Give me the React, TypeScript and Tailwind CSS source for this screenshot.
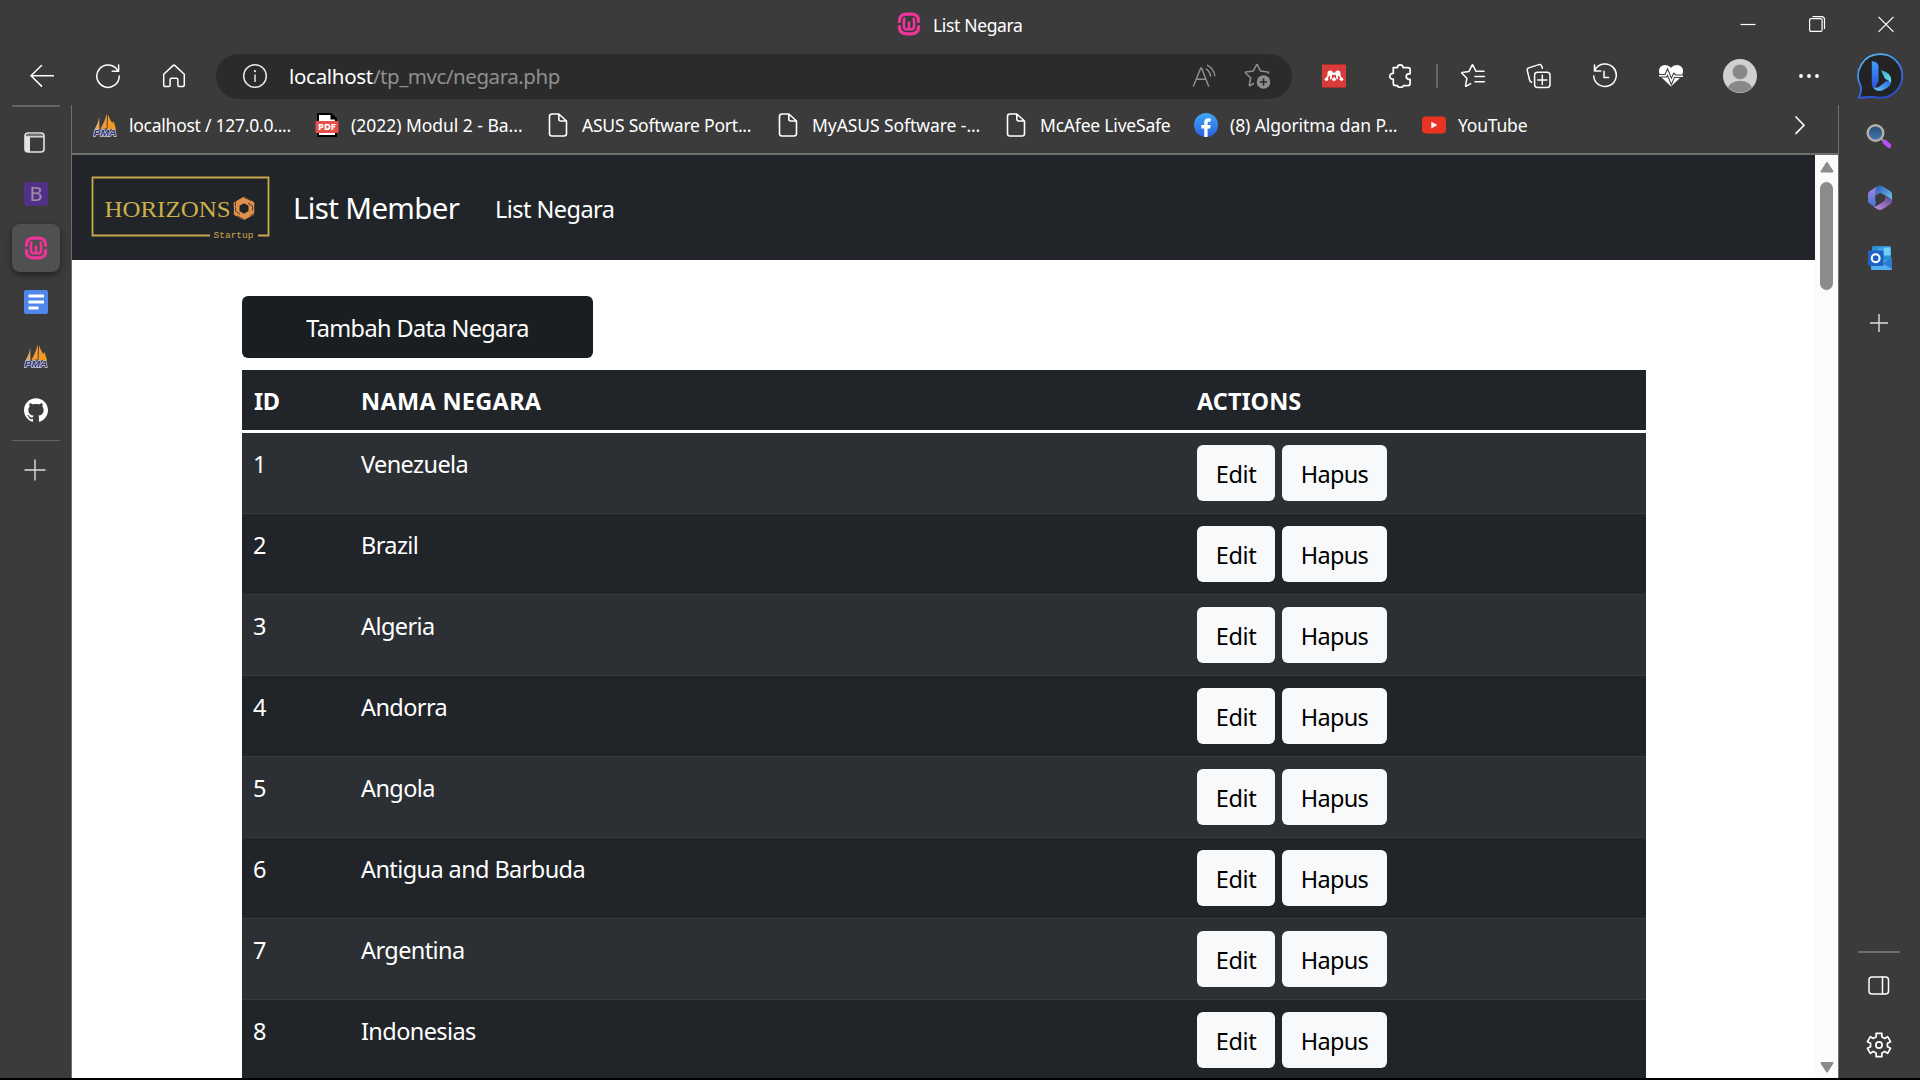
import type { ReactNode } from "react";
import { SiGithub } from "react-icons/si";

type Bookmark = { label: string; icon: ReactNode; cell: string; text: string };

const line = { fill: "none", stroke: "currentColor", strokeWidth: 1.5, strokeLinecap: "round", strokeLinejoin: "round" } as const;

function Icon({ children, size = 24, className = "" }: { children: ReactNode; size?: number; className?: string }) {
  return (
    <svg width={size} height={size} viewBox={`0 0 ${size} ${size}`} className={`shrink-0 ${className}`}>
      {children}
    </svg>
  );
}

const BackIcon = () => (
  <Icon><path {...line} d="M23.5 11.8H1M11.5 1.5 1 11.8l10.5 10.3" /></Icon>
);

const ReloadIcon = () => (
  <Icon size={26}><path {...line} d="M22.5 7.2A11.2 11.2 0 1 0 24.2 13M23.6 2v6.2h-6.4" /></Icon>
);

const HomeIcon = () => (
  <Icon>
    <path {...line} d="M1.7 10.3 11 1.6q1-.9 2 0l9.3 8.7v10.4q0 1.8-1.8 1.8h-3.4q-1.2 0-1.2-1.2v-5.6q0-1.5-1.5-1.5h-4.8q-1.5 0-1.5 1.5v5.6q0 1.2-1.2 1.2H3.5q-1.8 0-1.8-1.8z" />
  </Icon>
);

const InfoIcon = () => (
  <Icon size={26} className="text-[#e6e6e6]">
    <circle {...line} cx="13" cy="13" r="11.3" />
    <path {...line} strokeLinecap="butt" d="M13 11.5v7.5" />
    <circle cx="13" cy="8.2" r="1.1" fill="currentColor" />
  </Icon>
);

const ReadAloudIcon = () => (
  <Icon size={26} className="text-[#8f8f8f]">
    <path {...line} d="M2.5 23 9.8 5h.8L17.5 23M5.2 16.3h9.8M15.3 6.2q3.7 2.3 4.2 7M16.5 2.3q6.4 3.5 7.3 10.3" />
  </Icon>
);

const AddFavoriteIcon = () => (
  <Icon size={28} className="text-[#8f8f8f]">
    <path {...line} d="M9.5 20.5 6 22.7q-.7.3-.7-.5l1.4-7.2L1.5 10q-.5-.7.4-.9l7.3-1L12.4 2q.5-.8 1 0l3.2 6.1 7.3 1q.9.2.4 1" />
    <circle cx="19.5" cy="19" r="6.8" fill="#8f8f8f" />
    <path d="M19.5 15.3v7.4M15.8 19h7.4" stroke="#2b2b2b" strokeWidth="1.6" />
  </Icon>
);

const MendeleyIcon = () => (
  <Icon>
    <rect width="24" height="24" fill="#d93a3a" />
    <path d="M0 .5h24M0 23.5h24" stroke="#a12f2f" />
    <g fill="#fff">
      <circle cx="8.2" cy="9.2" r="2.7" /><circle cx="15.8" cy="9.2" r="2.7" /><circle cx="12" cy="9.8" r="1.4" />
      <circle cx="4.5" cy="15.2" r="1.8" /><circle cx="19.5" cy="15.2" r="1.8" /><circle cx="12" cy="15.2" r="1.9" />
    </g>
    <path d="M7 9.5 4.8 15M17 9.5l2.2 5.5M9.2 10l-.4 4.5M14.8 10l.4 4.500" stroke="#fff" strokeWidth="1.8" strokeLinecap="round" />
  </Icon>
);

const PuzzleIcon = () => (
  <Icon>
    <path {...line} strokeWidth={1.7} d="M5.3 3.6h4.1c.3-3.6 5.4-3.6 5.7 0h5q2 0 2 2v4.2h-1.4c-3.3.4-3.3 5.2 0 5.6h1.4v4.2q0 2-2 2h-4.7c-.6 2.4-5.4 2.4-6 0H7.3q-2 0-2-2v-4.4c-4.7.1-4.7-6 0-5.9z" />
  </Icon>
);

const FavoritesIcon = () => (
  <Icon size={26}>
    <path {...line} d="M16 8.3 13 2.3q-.5-.9-1 0L9 8.4l-6.8 1q-.9.2-.3.9l5 4.9-1.3 7.5q-.1.9.7.5l4.4-2.6M16 8.3h8M15 13.4h9.3M15 18.8h9.3" />
  </Icon>
);

const CollectionsIcon = () => (
  <Icon size={26}>
    <path {...line} d="M5.6 19.2Q4 18.8 3.6 17L1.3 7.6q-.4-2 1.4-2.7L12.9 1.6q2-.4 2.8 1.4l.7 2.2" />
    <rect {...line} x="8.6" y="9.2" width="15.4" height="15.4" rx="3" />
    <path {...line} d="M16.3 12.3v9.2M11.7 16.9h9.2" />
  </Icon>
);

const HistoryIcon = () => (
  <Icon size={26}>
    <path {...line} d="M2.8 7.3A11.3 11.3 0 1 1 1.7 13M2.5 2v6h6.2M12 8.2v6.2h4.6" />
  </Icon>
);

const HeartPulseIcon = () => (
  <Icon size={26}>
    <path fill="#fff" d="M13 23.5 3 14Q1 11.500 1 8.500 1 2 7.300 2 10.800 2 13 4.800 15.200 2 18.700 2 25 2 25 8.500q0 3-2 5.500z" />
    <path d="M0 12.800h7.800l1.700-3.700 3.900 9.300 2.700-6.200 1.100 1H26" fill="none" stroke="#3b3b3b" strokeWidth="3.600" />
    <path d="M1 12.800h6.800l1.700-3.700 3.900 9.300 2.700-6.200 1.100 1H25" fill="none" stroke="#fff" strokeWidth="1.500" />
  </Icon>
);

const AvatarIcon = () => (
  <Icon size={34}>
    <defs><clipPath id="avatar"><circle cx="17" cy="17" r="16.5" /></clipPath></defs>
    <circle cx="17" cy="17" r="17" fill="#d2d0ce" />
    <circle cx="17" cy="12.8" r="7.4" fill="#8a8886" />
    <ellipse cx="17" cy="31.5" rx="12.5" ry="9.8" fill="#8a8886" clipPath="url(#avatar)" />
  </Icon>
);

const DotsIcon = () => (
  <Icon><circle cx="4" cy="12" r="1.9" fill="#fff" /><circle cx="12" cy="12" r="1.9" fill="#fff" /><circle cx="20" cy="12" r="1.9" fill="#fff" /></Icon>
);

const BingIcon = () => (
  <Icon size={46}>
    <defs>
      <linearGradient id="bubble" x1="0" y1="0" x2=".4" y2="1"><stop offset="0" stopColor="#55c0f5" /><stop offset=".5" stopColor="#3f86ee" /><stop offset="1" stopColor="#2a50d8" /></linearGradient>
      <linearGradient id="stem" x1="0" y1="0" x2="0" y2="1"><stop offset="0" stopColor="#3fa0f5" /><stop offset="1" stopColor="#2a50e0" /></linearGradient>
      <linearGradient id="foot" x1="0" y1="1" x2="1" y2="0"><stop offset="0" stopColor="#62c8f8" /><stop offset="1" stopColor="#2b62e4" /></linearGradient>
      <linearGradient id="leaf" x1="0" y1="0" x2="1" y2="1"><stop offset="0" stopColor="#3fa6e8" /><stop offset="1" stopColor="#6be3d8" /></linearGradient>
    </defs>
    <path d="M23 1.2a21.7 21.7 0 1 1-3 43.1q-5-.8-18.2.5 3-5.5 2-11.5A21.7 21.7 0 0 1 23 1.2z" fill="#232323" stroke="url(#bubble)" strokeWidth="1.8" strokeLinejoin="round" />
    <path d="M14.8 8q5.5 1 6.700 4.400v15.500l-3.200 7.200q-3.500-.9-3.500-5.200z" fill="url(#stem)" />
    <path d="M15.4 33q1.800 3 6.300 1.100l8-6.300h4.400q.2 4.700-3.600 6.700l-5.300 3q-3.500 1.200-7-.8-2.100-1.400-2.800-3.700z" fill="url(#foot)" />
    <path d="M24 17.200q10 2.300 10.200 9.800.1 1.600-.6 2.800-1.200-2.400-5.700-4z" fill="url(#leaf)" />
  </Icon>
);

const WampIcon = () => (
  <Icon>
    <g fill="none" stroke="#ee3399">
      <path strokeWidth="3.2" d="M2.4 10.8V9.2Q2.4 2.2 9.4 2.2h5.2Q21.6 2.2 21.600 9.200v1.6M2.4 13.200v1.6q0 7 7 7h5.2q7 0 7-7v-1.6" />
      <path strokeWidth="2.6" d="M8.2 5.8Q6.9 6.6 6.9 9v4.5q0 4 3 4 2.1 0 2.1-2.4v-5.5M12 15.1q0 2.4 2.1 2.4 3 0 3-4V9q0-2.4-1.3-3.2" />
    </g>
  </Icon>
);

const PmaIcon = () => (
  <Icon>
    <defs><linearGradient id="sail" x1="0" y1="0" x2="1" y2="0"><stop offset="0" stopColor="#dcae7a" /><stop offset=".5" stopColor="#f39a2c" /><stop offset="1" stopColor="#f7981d" /></linearGradient></defs>
    <path d="M6.2 4 6.5 16 1.5 16.5Q5.5 10 6.2 4zM14 .2 13.7 15.5 7.5 16Q12 8 14 .2zM15 1.5Q18 9 19.5 10l1-2 2 6.5.5 2-8.5-.5z" fill="url(#sail)" />
    <text x="0.5" y="23.4" fontFamily="Liberation Sans" fontWeight="700" fontStyle="italic" fontSize="9.5" textLength="23" lengthAdjust="spacingAndGlyphs" fill="#30356f" stroke="#cfd0e4" strokeWidth="1.3" paintOrder="stroke">PMA</text>
  </Icon>
);

const PdfIcon = () => (
  <Icon>
    <path d="M3 1h13l5 5v17H3z" fill="#fff" stroke="#000" strokeWidth="2" />
    <path d="M15.500 0 22 6.5h-6.5z" fill="#000" />
    <rect x=".5" y="8" width="23" height="12" rx="1" fill="#e8504c" />
    <text x="3" y="17" fontFamily="Noto Sans" fontWeight="800" fontSize="8.5" textLength="18" lengthAdjust="spacingAndGlyphs" fill="#fff">PDF</text>
  </Icon>
);

const FileIcon = () => (
  <Icon>
    <path {...line} strokeWidth={1.6} d="M6 1h6.8L20.5 8v12.5q0 2.5-2.5 2.5H6q-2.500 0-2.500-2.500v-17Q3.500 1 6 1zM12.8 1v5q0 2 2 2h5.7" />
  </Icon>
);

const FacebookIcon = () => (
  <Icon>
    <defs>
      <linearGradient id="fb" x1="0" y1="0" x2="0" y2="1"><stop offset="0" stopColor="#3fa9f5" /><stop offset="1" stopColor="#2a5fe0" /></linearGradient>
      <clipPath id="fbc"><circle cx="12" cy="12" r="12" /></clipPath>
    </defs>
    <circle cx="12" cy="12" r="12" fill="url(#fb)" />
    <path clipPath="url(#fbc)" d="M10.2 24v-8.5H7.3V12h2.9V9.7q0-4.4 4.2-4.4 1.2 0 2.3.3v3h-1.4q-1.7 0-1.7 1.7V12h3.1l-.5 3.5h-2.6V24z" fill="#fff" />
  </Icon>
);

const YoutubeIcon = () => (
  <Icon><rect y="3.5" width="24" height="17" rx="4" fill="#ea3323" /><path d="M9.3 8.800v6.6l6-3.3z" fill="#fff" /></Icon>
);

const TabsIcon = () => (
  <Icon>
    <rect x="1" y="2" width="19" height="19" rx="3" fill="none" stroke="#e4e4e4" strokeWidth="1.6" />
    <path d="M1.800 5q0-2.200 2.200-2.200h13q2.200 0 2.200 2.200z" fill="#777" />
    <path d="M1 6h5v15H4q-3 0-3-3z" fill="#e4e4e4" />
    <path d="M1 5.800h19" stroke="#e4e4e4" strokeWidth="1.4" />
  </Icon>
);

const DocsIcon = () => (
  <Icon>
    <rect width="24" height="24" rx="2" fill="#4f86ec" />
    <path d="M4.500 6H20M4.500 12H20M4.500 18h10" stroke="#fff" strokeWidth="2.8" />
  </Icon>
);

const PlusIcon = ({ reach }: { reach: "wide" | "narrow" }) => (
  <Icon><path d={reach === "wide" ? "M12 1.500v21M1.500 12h21" : "M12 3v18M3 12h18"} stroke="#dedede" strokeWidth="1.4" /></Icon>
);

const SearchIcon = () => (
  <Icon size={28}>
    <defs>
      <linearGradient id="glass" x1="0" y1="0" x2="0" y2="1"><stop offset="0" stopColor="#2b4a68" /><stop offset="1" stopColor="#447ab8" /></linearGradient>
    </defs>
    <path d="m16.5 17 3 3" stroke="#999" strokeWidth="2" />
    <path d="m19.8 20 4.200 3.800" stroke="#b94df2" strokeWidth="4.600" strokeLinecap="round" />
    <circle cx="10.500" cy="11" r="7.800" fill="url(#glass)" stroke="#b4b0ac" strokeWidth="2.400" />
  </Icon>
);

const M365Icon = () => (
  <Icon size={26}>
    <defs>
      <linearGradient id="ma" x1="0" y1="0" x2="0" y2="1"><stop offset="0" stopColor="#a98add" /><stop offset="1" stopColor="#4472d8" /></linearGradient>
      <linearGradient id="mb" x1="0" y1="0" x2="1" y2="1"><stop offset="0" stopColor="#3058b8" /><stop offset="1" stopColor="#6cc6f4" /></linearGradient>
      <linearGradient id="mc" x1="0" y1="1" x2="1" y2="0"><stop offset="0" stopColor="#c391ea" /><stop offset="1" stopColor="#5f468f" /></linearGradient>
    </defs>
    <path d="M10.5 1.2Q8.700 3 8.700 6v11l-.5 4.500q-1 0-2-.6L2.500 18.600Q1 17.500 1 16V9q0-1.800 1.500-2.700z" fill="url(#ma)" />
    <path d="M10.5 1.2q2.500-1.300 5 0L23.500 6.200Q25 7.200 25 9v7q-.3-1.800-2-2.800L14.500 8.500Q11 8 9.500 12l-.8-2V5q.3-2.600 1.800-3.800z" fill="url(#mb)" />
    <path d="M25 15.500q.2 2.600-1.500 3.500l-8 5.200q-2.500 1.300-5 0L6 21.400q2.200.5 4-.7l6-4q2.400-1.600 1.600-5.300l5.400 2.200q1.600.7 2 1.900z" fill="url(#mc)" />
    <path d="m13 8.500 4.200 2.300v4.600L13 17.800l-4.200-2.400v-4.600z" fill="#3b3b3b" stroke="#3b3b3b" strokeLinejoin="round" />
  </Icon>
);

const OutlookIcon = () => (
  <Icon>
    <rect x="4" width="19" height="17" rx="1.5" fill="#2f8fd8" />
    <path d="M10 1.500h6v8h-6z" fill="#3ca4e4" /><path d="M16 1.500h6.500v8H16z" fill="#6fd0f8" />
    <path d="M3 14.500h21V24H4.500Q3 24 3 22.500z" fill="#53b2ee" /><path d="M24 11.500V23L14.500 17.500z" fill="#2c7bd0" />
    <rect y="4.500" width="15.500" height="15.500" rx="1.500" fill="#1f62c6" />
    <circle cx="7.700" cy="12.200" r="3.900" fill="none" stroke="#fff" strokeWidth="2.100" />
  </Icon>
);

const PanelIcon = () => (
  <Icon>
    <rect {...line} x="2" y="3" width="19.500" height="17" rx="3" /><path {...line} d="M15.500 3v17" />
  </Icon>
);

// Six-toothed outline of the settings gear, centred on (13, 13).
const gearPoints = Array.from({ length: 6 }, (_, k) =>
  [[-19, 8.6], [-14, 12], [14, 12], [19, 8.6]].map(([deg, r]) => {
    const a = ((k * 60 - 90 + deg) * Math.PI) / 180;
    return `${(13 + r * Math.cos(a)).toFixed(2)},${(13 + r * Math.sin(a)).toFixed(2)}`;
  }).join(" "),
).join(" ");

const GearIcon = () => (
  <Icon size={26}><polygon {...line} strokeWidth={1.7} points={gearPoints} /><circle {...line} strokeWidth={1.7} cx="13" cy="13" r="3.1" /></Icon>
);

const HorizonsLogo = () => (
  <svg width="180" height="66" viewBox="0 0 180 66" className="shrink-0">
    <path d="M120 60.5H2.5V2.5h176v58H168" fill="none" stroke="#c9a94a" strokeWidth="1.8" />
    <text x="14.500" y="41.500" fontFamily="Liberation Serif" fontSize="24" textLength="126" lengthAdjust="spacingAndGlyphs" fill="#cdb04a">HORIZONS</text>
    <path d="m154 24.800 7.500 4.200v8.800l-7.500 4.200-7.500-4.200V29z" fill="none" stroke="#e0904a" strokeWidth="6" strokeLinejoin="round" />
    <path d="M153 21.500 145.500 26v5M161 25.500l-7-3.200M164.800 30v8l-4.500 3M158 28l4.500 3v4.500M155 45l7.500-4M147 41l7 3.500M143.500 29.500v8.500M150 39.500l-4.500-3.500v-4" fill="none" stroke="#212529" strokeWidth=".8" />
    <text x="123.500" y="63" fontFamily="Liberation Mono" fontSize="9.500" textLength="40" fill="#c9a94a">Startup</text>
  </svg>
);

const bookmarks: Bookmark[] = [
  { label: "localhost / 127.0.0....", icon: <PmaIcon />, cell: "w-[222px]", text: "tracking-[-0.25px]" },
  { label: "(2022) Modul 2 - Ba...", icon: <PdfIcon />, cell: "w-[231px]", text: "tracking-[-0.03px]" },
  { label: "ASUS Software Port...", icon: <FileIcon />, cell: "w-[230px]", text: "tracking-[-0.22px]" },
  { label: "MyASUS Software -...", icon: <FileIcon />, cell: "w-[228px]", text: "tracking-[-0.07px]" },
  { label: "McAfee LiveSafe", icon: <FileIcon />, cell: "w-[190px]", text: "tracking-[-0.2px]" },
  { label: "(8) Algoritma dan P...", icon: <FacebookIcon />, cell: "w-[228px]", text: "tracking-[-0.08px]" },
  { label: "YouTube", icon: <YoutubeIcon />, cell: "w-[120px]", text: "tracking-[-0.2px]" },
];

const countries = ["Venezuela", "Brazil", "Algeria", "Andorra", "Angola", "Antigua and Barbuda", "Argentina", "Indonesias"];

function ToolCell({ children, className = "w-[66px]" }: { children: ReactNode; className?: string }) {
  return <button className={`flex h-full shrink-0 items-center justify-center ${className}`}>{children}</button>;
}

function RailCell({ children }: { children: ReactNode }) {
  return <button className="flex h-[54px] w-full shrink-0 items-center justify-center">{children}</button>;
}

function TitleBar() {
  return (
    <header className="flex h-12 shrink-0 items-center">
      <div className="flex flex-1 items-center pl-[897px]">
        <WampIcon />
        <span className="ml-[12px] mt-[2px] text-[17.5px] leading-6 tracking-[-0.35px]">List Negara</span>
      </div>
      <div className="flex items-center pr-[25px]">
        <Icon size={18}><path d="M1.500 9.500h15" stroke="#fff" strokeWidth="1.2" /></Icon>
        <Icon size={18} className="ml-[51px]">
          <rect x="1.600" y="3.600" width="12.500" height="12.800" rx="1.500" fill="none" stroke="#fff" strokeWidth="1.2" />
          <path d="M4.500 1.600h9q3 0 3 3V14" fill="none" stroke="#fff" strokeWidth="1.2" />
        </Icon>
        <Icon size={18} className="ml-[51px]"><path d="m1.500 1.800 15 15M16.500 1.800l-15 15" stroke="#fff" strokeWidth="1.2" /></Icon>
      </div>
    </header>
  );
}

function Toolbar() {
  return (
    <div className="flex h-[57px] shrink-0 items-center pb-0.5 pl-[9px] pt-px">
      <ToolCell><BackIcon /></ToolCell>
      <ToolCell><ReloadIcon /></ToolCell>
      <ToolCell><HomeIcon /></ToolCell>
      <div className="ml-[9px] flex h-[45px] w-[1076px] shrink-0 items-center rounded-full bg-[#2b2b2b] pl-[26px] pr-[20px]">
        <InfoIcon />
        <p className="ml-[21px] flex-1 text-[20.5px] leading-7 text-[#8f8f8f]">
          <span className="tracking-[-0.3px] text-white">localhost</span>
          <span className="tracking-[-0.45px]">/tp_mvc/negara.php</span>
        </p>
        <ReadAloudIcon />
        <div className="ml-[27px] pt-0.5"><AddFavoriteIcon /></div>
      </div>
      <ToolCell className="ml-[9px] w-[66px]"><MendeleyIcon /></ToolCell>
      <ToolCell><PuzzleIcon /></ToolCell>
      <div className="ml-[3px] mr-[2px] h-6 w-0.5 shrink-0 bg-[#666]" />
      <ToolCell><FavoritesIcon /></ToolCell>
      <ToolCell><CollectionsIcon /></ToolCell>
      <ToolCell><HistoryIcon /></ToolCell>
      <ToolCell><HeartPulseIcon /></ToolCell>
      <ToolCell className="w-[72px]"><AvatarIcon /></ToolCell>
      <ToolCell><DotsIcon /></ToolCell>
      <ToolCell className="w-[75px]"><BingIcon /></ToolCell>
    </div>
  );
}

function TabRail() {
  return (
    <aside className="flex w-[71px] shrink-0 flex-col items-center">
      <div className="h-0.5 w-12 shrink-0 bg-[#646464]" />
      <div className="flex w-full flex-col pl-px pt-[9px]">
        <RailCell><TabsIcon /></RailCell>
        <div className="-mt-[3px]">
          <RailCell><span className="flex h-6 w-6 items-center justify-center rounded-[3px] bg-[#533087] text-[20px] leading-6 text-[#9a90a5]">B</span></RailCell>
        </div>
        <RailCell><span className="flex h-12 w-12 items-center justify-center rounded-lg bg-[#505050] shadow-[0_3px_6px_rgba(0,0,0,0.45)]"><WampIcon /></span></RailCell>
        <RailCell><DocsIcon /></RailCell>
        <RailCell><PmaIcon /></RailCell>
        <RailCell><SiGithub size={24} color="#fff" /></RailCell>
      </div>
      <div className="mt-[3px] h-px w-12 shrink-0 bg-[#646464]" />
      <div className="mt-[17px] pr-px"><PlusIcon reach="wide" /></div>
    </aside>
  );
}

function BookmarksBar() {
  return (
    <nav className="flex h-[50px] shrink-0 items-center border-b-[2px] border-[#6d6d6d] pb-[8px] pl-[21px]">
      {bookmarks.map((b) => (
        <div key={b.label} className={`flex shrink-0 items-center whitespace-nowrap ${b.cell}`}>
          {b.icon}
          <span className={`pl-[12px] text-[17.5px] leading-6 ${b.text}`}>{b.label}</span>
        </div>
      ))}
      <Icon className="ml-auto mr-[26px]"><path d="m7.500 3.500 8.500 8.700-8.500 8.700" fill="none" stroke="#fff" strokeWidth="1.6" /></Icon>
    </nav>
  );
}

function ActionButton({ children, className }: { children: ReactNode; className: string }) {
  return (
    <button className={`flex h-14 items-center justify-center rounded-md bg-[#f8f9fa] pt-px text-[23.5px] leading-9 text-black ${className}`}>
      {children}
    </button>
  );
}

function CountryTable() {
  return (
    <div className="w-[1404px]">
      <div className="flex h-[60px] bg-[#212529] pl-3 pt-[13px] text-[23.5px] font-bold leading-9 text-white">
        <span className="w-[107px] tracking-[-0.4px]">ID</span>
        <span className="w-[836px] tracking-[0.3px]">NAMA NEGARA</span>
        <span>ACTIONS</span>
      </div>
      <div className="h-[3px] bg-white" />
      {countries.map((name, i) => (
        <div
          key={name}
          className={`flex h-[81px] border-b border-[#373b3e] pl-[11px] pt-3 text-[23.5px] leading-9 tracking-[-0.6px] text-white ${i % 2 === 0 ? "bg-[#2c3034]" : "bg-[#212529]"}`}
        >
          <span className="w-[108px] pt-px">{i + 1}</span>
          <span className="w-[836px] pt-px">{name}</span>
          <div className="flex gap-[7px]">
            <ActionButton className="w-[78px] tracking-[-0.4px]">Edit</ActionButton>
            <ActionButton className="w-[105px] tracking-[-0.7px]">Hapus</ActionButton>
          </div>
        </div>
      ))}
    </div>
  );
}

function Page() {
  return (
    <div className="min-w-0 flex-1 overflow-hidden bg-white">
      <div className="flex h-[105px] items-center bg-[#212529] pl-[18px] text-white">
        <HorizonsLogo />
        <a className="ml-[23px] w-[202px] text-[29.5px] leading-[45px] tracking-[-0.65px]">List Member</a>
        <a className="mt-[2px] text-[23.500px] leading-9 tracking-[-0.55px]">List Negara</a>
      </div>
      <div className="pl-[170px] pt-9">
        <button className="mb-3 flex h-[62px] w-[351px] items-center justify-center rounded-md bg-[#1a1e21] pt-px text-[23.5px] leading-9 tracking-[-0.62px] text-white">
          Tambah Data Negara
        </button>
        <CountryTable />
      </div>
    </div>
  );
}

function ScrollBar() {
  return (
    <div className="flex w-[23px] shrink-0 flex-col items-center bg-[#fbfbfb]">
      <svg width="16" height="12" className="mt-[6px] shrink-0"><path d="M8 2 13.500 10.500h-11z" fill="#8b8b8b" stroke="#8b8b8b" strokeWidth="2" strokeLinejoin="round" /></svg>
      <div className="mt-[9px] h-[108px] w-[13px] shrink-0 rounded-full bg-[#8b8b8b]" />
      <svg width="16" height="12" className="mb-[5px] mt-auto shrink-0"><path d="M8 10.500 2.500 2h11z" fill="#8b8b8b" stroke="#8b8b8b" strokeWidth="2" strokeLinejoin="round" /></svg>
    </div>
  );
}

function SideRail() {
  return (
    <aside className="flex w-[81px] shrink-0 flex-col items-center pb-[20px] pr-px pt-[17px]">
      <div className="pr-px"><SearchIcon /></div>
      <div className="mt-[35px] pl-px"><M365Icon /></div>
      <div className="mt-[35px] pl-px"><OutlookIcon /></div>
      <div className="mt-[41px] pr-px"><PlusIcon reach="narrow" /></div>
      <div className="mt-auto h-0.5 w-[42px] shrink-0 bg-[#6d6d6d]" />
      <div className="mt-[21px]"><PanelIcon /></div>
      <div className="mt-[34px]"><GearIcon /></div>
    </aside>
  );
}

export default function App() {
  return (
    <div className="flex h-[1080px] w-[1920px] flex-col overflow-hidden border-b-2 border-black bg-[#3b3b3b] font-['Noto_Sans',sans-serif] text-white">
      <TitleBar />
      <Toolbar />
      <div className="flex min-h-0 flex-1">
        <TabRail />
        <main className="flex min-w-0 flex-1 flex-col border-x border-[#6d6d6d]">
          <BookmarksBar />
          <div className="flex min-h-0 flex-1">
            <Page />
            <ScrollBar />
          </div>
        </main>
        <SideRail />
      </div>
    </div>
  );
}
